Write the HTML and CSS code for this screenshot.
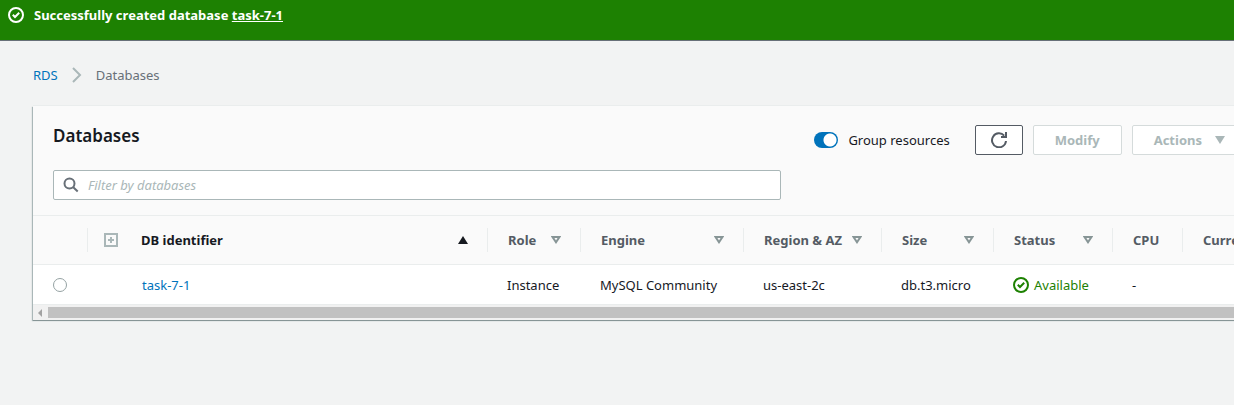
FILE: index.html
```
<!DOCTYPE html>
<html lang="en">
<head>
<meta charset="utf-8">
<title>RDS Databases</title>
<link rel="stylesheet" href="styles.css">
</head>
<body>
<svg class="defs" aria-hidden="true">
  <symbol id="ok" viewBox="0 0 16 16"><circle cx="8" cy="8" r="7"/><path d="M4.8 7.8 7 10l4.2-4.2"/></symbol>
  <symbol id="sort" viewBox="0 0 10 8"><path d="M1.6 1h6.8L5 6.2Z"/></symbol>
</svg>
<div class="flash" role="status">
  <svg class="icon-ok"><use href="#ok"/></svg>
  <span>Successfully created database <a href="#db">task-7-1</a></span>
</div>
<main class="content">
  <nav class="crumbs" aria-label="Breadcrumb">
    <a href="#rds">RDS</a>
    <svg class="chevron" viewBox="0 0 10 16"><path d="m1 1 7 7-7 7"/></svg>
    <span>Databases</span>
  </nav>
  <section class="panel">
    <header class="panel-head">
      <div class="title-row">
        <h1>Databases</h1>
        <div class="controls">
          <label class="toggle"><input type="checkbox" checked>Group resources</label>
          <button class="btn refresh" type="button" aria-label="Refresh">
            <svg viewBox="0 0 16 16"><path d="M13.2 3.6A7 7 0 1 0 15 9M10 5h5V0"/></svg>
          </button>
          <button class="btn" type="button" disabled>Modify</button>
          <button class="btn" type="button" disabled>Actions <svg class="caret" viewBox="0 0 10 8"><path d="M0 0h10L5 8Z"/></svg></button>
        </div>
      </div>
      <div class="filter">
        <svg viewBox="0 0 16 16"><circle cx="6.5" cy="6.5" r="5"/><path d="m10 10 4.7 4.5"/></svg>
        <input type="text" aria-label="Filter by databases" placeholder="Filter by databases">
      </div>
    </header>
    <div class="table-wrap">
      <table>
        <colgroup><col class="c-select"><col class="c-id"><col class="c-role"><col class="c-engine"><col class="c-region"><col class="c-size"><col class="c-status"><col class="c-cpu"><col class="c-activity"></colgroup>
        <thead>
          <tr>
            <th><div class="th"></div></th>
            <th class="sorted"><div class="th"><svg class="expand" viewBox="0 0 14 14"><path d="M1 1h12v12H1ZM4 7h6M7 4v6"/></svg>DB identifier<svg class="sort" viewBox="0 0 10 8"><path d="M5 0 10 8H0Z"/></svg></div></th>
            <th><div class="th">Role<svg class="sort"><use href="#sort"/></svg></div></th>
            <th><div class="th">Engine<svg class="sort"><use href="#sort"/></svg></div></th>
            <th><div class="th">Region &amp; AZ<svg class="sort"><use href="#sort"/></svg></div></th>
            <th><div class="th">Size<svg class="sort"><use href="#sort"/></svg></div></th>
            <th><div class="th">Status<svg class="sort"><use href="#sort"/></svg></div></th>
            <th><div class="th">CPU</div></th>
            <th><div class="th">Current activity</div></th>
          </tr>
        </thead>
        <tbody>
          <tr>
            <td><input class="pick" type="radio" name="db" aria-label="Select task-7-1"></td>
            <td class="id"><a href="#db">task-7-1</a></td>
            <td>Instance</td>
            <td>MySQL Community</td>
            <td>us-east-2c</td>
            <td>db.t3.micro</td>
            <td><span class="status"><svg class="icon-ok"><use href="#ok"/></svg>Available</span></td>
            <td>-</td>
            <td></td>
          </tr>
        </tbody>
      </table>
    </div>
    <div class="scrollbar"><svg viewBox="0 0 4 8"><path d="M4 0v8L0 4Z"/></svg><div class="thumb"></div></div>
  </section>
</main>
</body>
</html>
```
FILE: styles.css
```
* { box-sizing: border-box; }
body {
  margin: 0;
  background: #f2f3f3;
  color: #16191f;
  font: 13px/20px "Noto Sans", sans-serif;
  overflow-x: hidden;
}
svg { flex: none; fill: none; stroke: currentColor; stroke-width: 2; }
a { color: #0073bb; text-decoration: none; }
button, input { font: inherit; }
.defs { position: absolute; width: 0; height: 0; }
.icon-ok { width: 16px; height: 16px; }

.flash {
  display: flex;
  align-items: center;
  gap: 10px;
  padding: 5px 8px 15px;
  background: #1d8102;
  border-bottom: 1px solid #687078;
  color: #fff;
  font-weight: 700;
}
.flash a { color: inherit; text-decoration: underline; }

.content { padding-left: 33px; overflow: hidden; padding-bottom: 24px; }
.crumbs {
  display: flex;
  align-items: center;
  gap: 14px;
  padding: 24px 0 21px;
  color: #687078;
}
.chevron { width: 10px; height: 16px; color: #aab7b8; }

/* The panel runs on past the right edge of the window. */
.panel {
  margin-right: -33px;
  background: #fff;
  box-shadow: 0 1px 0 0 #879596, -1px 1px 1px 0 #aab7b8, 0 -1px 0 0 #eaeded;
}
.panel-head { padding: 19px 20px 15px; background: #fafafa; border-bottom: 1px solid #eaeded; }
.title-row { display: flex; justify-content: space-between; align-items: flex-start; }
h1 { margin: 0; font-size: 17px; line-height: 22px; font-weight: 600; }
.controls { display: flex; align-items: center; gap: 10px; }
.toggle { display: flex; align-items: center; gap: 10px; margin-right: 15px; }
.toggle input {
  appearance: none;
  width: 24px;
  height: 16px;
  margin: 0;
  border-radius: 8px;
  background: radial-gradient(circle at 16px 8px, #fff 6px, #0073bb 7px);
}
.btn {
  display: flex;
  align-items: center;
  gap: 13px;
  height: 30px;
  padding: 0 21px;
  border: 1px solid #545b64;
  border-radius: 2px;
  background: #fff;
  color: #545b64;
  font-weight: 700;
}
.btn:disabled { border-color: #d5dbdb; color: #aab7b8; }
.refresh { padding: 0 15px; }
.refresh svg { width: 16px; height: 16px; }
.caret { width: 10px; height: 8px; fill: currentColor; stroke: none; }

.filter {
  display: flex;
  align-items: center;
  gap: 9px;
  max-width: 728px;
  height: 30px;
  margin-top: 15px;
  padding: 0 9px;
  border: 1px solid #aab7b8;
  border-radius: 2px;
  background: #fff;
}
.filter svg { width: 16px; height: 16px; color: #687078; }
.filter input { flex: 1; min-width: 0; padding: 0; border: 0; outline: 0; background: none; }
.filter input::placeholder { color: #aab7b8; font-style: italic; }

.table-wrap { overflow: hidden; }
table { width: 1400px; table-layout: fixed; border-collapse: separate; border-spacing: 0; }
.c-select { width: 55px; }
.c-id { width: 400px; }
.c-role { width: 93px; }
.c-engine { width: 163px; }
.c-region { width: 138px; }
.c-size { width: 112px; }
.c-status { width: 119px; }
.c-cpu { width: 70px; }
th {
  padding: 12px 0;
  background: #fafafa;
  border-bottom: 1px solid #eaeded;
  color: #545b64;
  font-weight: 700;
  text-align: left;
  white-space: nowrap;
}
.th { display: flex; align-items: center; height: 24px; padding: 0 19px 0 20px; border-right: 1px solid #eaeded; }
.sorted { color: #16191f; }
.sorted .th { padding-left: 16px; }
.expand { width: 14px; height: 14px; margin-right: 23px; color: #aab7b8; }
.sort { width: 10px; height: 8px; margin-left: auto; color: #879596; }
.sorted .sort { color: #16191f; fill: currentColor; stroke: none; }
td { height: 40px; padding: 0 19px; border-bottom: 1px solid #eaeded; white-space: nowrap; }
td.id { padding-left: 54px; }
.pick {
  appearance: none;
  display: block;
  width: 14px;
  height: 14px;
  margin: 0 0 0 1px;
  border: 1px solid #95a2a3;
  border-radius: 50%;
  background: #fff;
}
.status { display: flex; align-items: center; gap: 5px; color: #1d8102; }

.scrollbar { display: flex; align-items: center; gap: 6px; height: 15px; padding-left: 5px; background: #f1f1f1; }
.scrollbar svg { width: 4px; height: 8px; fill: #a3a3a3; stroke: none; }
.thumb { flex: 1; height: 11px; background: #c1c1c1; }
```
